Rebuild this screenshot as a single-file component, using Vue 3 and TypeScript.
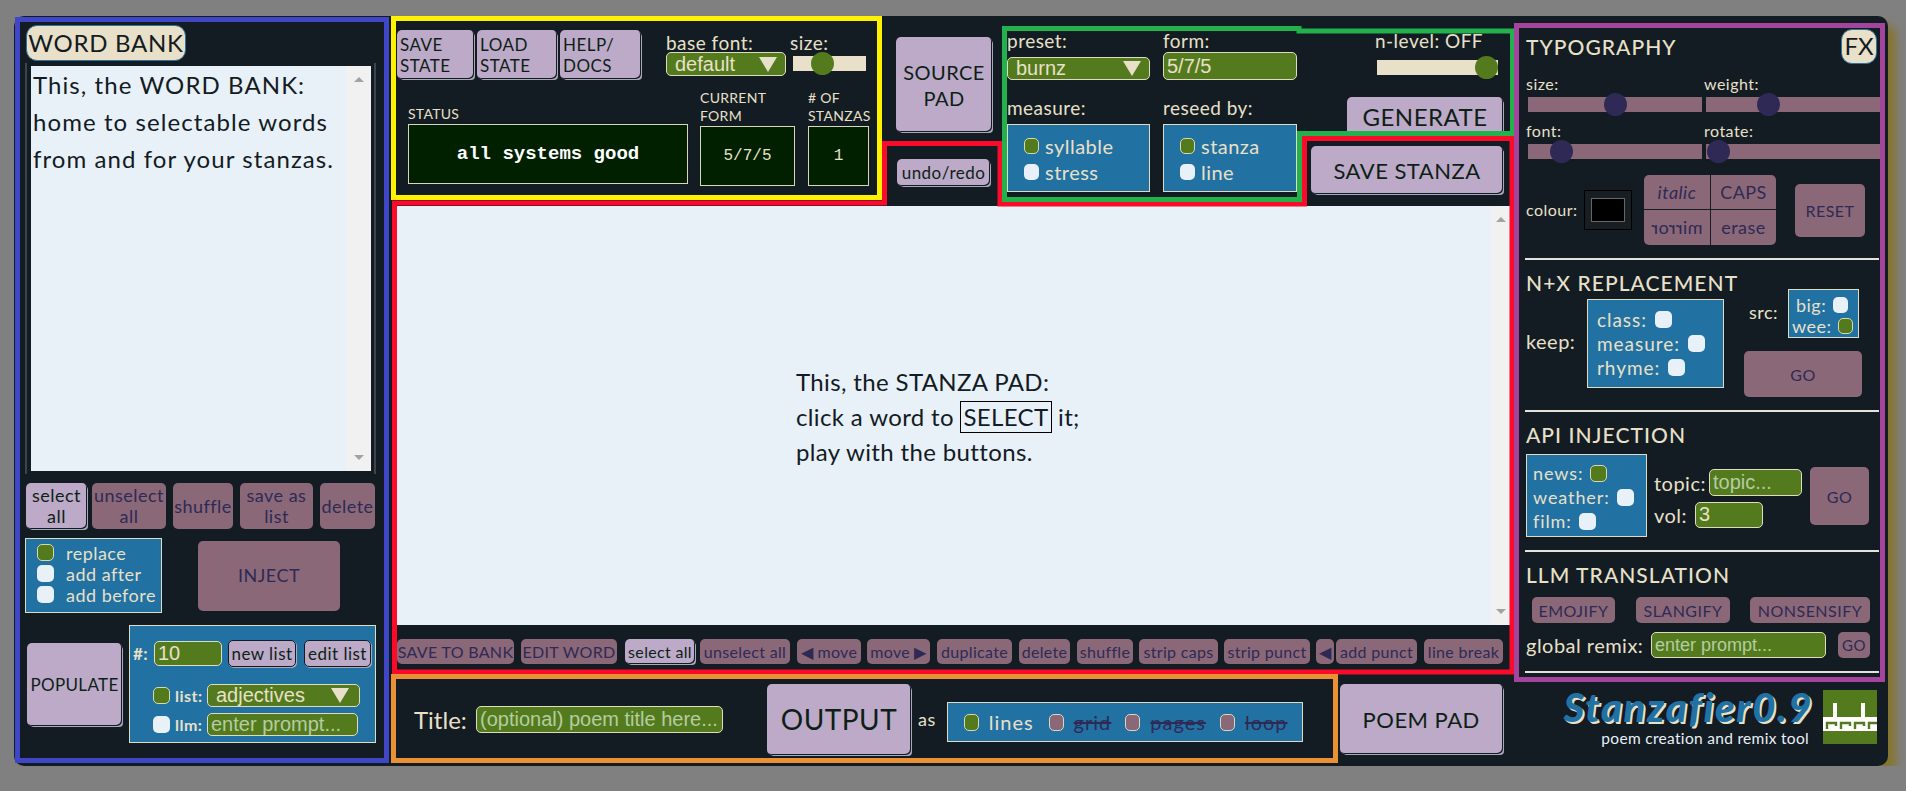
<template>
  <div class="app">
    <!-- word bank -->
    <aside class="bank">
      <div class="pill word-title">WORD BANK</div>
      <div class="textbox bank-text">
        <div class="textbox-body">This, the WORD BANK:<br />home to selectable words<br />from and for your stanzas.</div>
        <div class="scroll"><i class="up"></i><i class="down"></i></div>
      </div>
      <div class="bank-actions">
        <button class="btn w61">select<br />all</button>
        <button class="btn off w74">unselect<br />all</button>
        <button class="btn off w60">shuffle</button>
        <button class="btn off w73">save as<br />list</button>
        <button class="btn off w55">delete</button>
      </div>
      <div class="inject-row">
        <div class="box insert-opts">
          <label><span class="chk on"></span>replace</label>
          <label><span class="chk"></span>add after</label>
          <label><span class="chk"></span>add before</label>
        </div>
        <button class="btn off inject">INJECT</button>
      </div>
      <div class="populate-row">
        <button class="btn populate">POPULATE</button>
        <div class="box pop-opts">
          <div class="pop-top">
            <span class="hash">#:</span>
            <input class="field count" value="10" />
            <button class="btn mini new-list">new list</button>
            <button class="btn mini edit-list">edit list</button>
          </div>
          <div class="pop-line">
            <span class="chk on"></span><span class="pop-lab">list:</span>
            <div class="field picker list-pick">adjectives<i class="tri"></i></div>
          </div>
          <div class="pop-line llm-line">
            <span class="chk"></span><span class="pop-lab">llm:</span>
            <input class="field llm-input" placeholder="enter prompt..." />
          </div>
        </div>
      </div>
    </aside>

    <main class="centre">
      <div class="top">
        <section class="state">
          <div class="state-top">
            <button class="btn left-text w77">SAVE<br />STATE</button>
            <button class="btn left-text w80">LOAD<br />STATE</button>
            <button class="btn left-text w81">HELP/<br />DOCS</button>
            <div class="font-pick">
              <div class="lab">base font:</div>
              <div class="field picker base-pick">default<i class="tri"></i></div>
            </div>
            <div class="font-size">
              <div class="lab">size:</div>
              <div class="slider cream-track"><span class="thumb green" :style="{ left: '18px' }"></span></div>
            </div>
          </div>
          <div class="readouts">
            <div class="readout status">
              <div class="small-lab">STATUS</div>
              <div class="screen bright">all systems good</div>
            </div>
            <div class="readout form-read">
              <div class="small-lab">CURRENT<br />FORM</div>
              <div class="screen">5/7/5</div>
            </div>
            <div class="readout count-read">
              <div class="small-lab"># OF<br />STANZAS</div>
              <div class="screen">1</div>
            </div>
          </div>
        </section>

        <section class="mid-btns">
          <button class="btn source">SOURCE<br />PAD</button>
          <button class="btn undo">undo/redo</button>
        </section>

        <section class="gen">
          <div class="gen-col col-a">
            <div class="lab">preset:</div>
            <div class="field picker preset-pick">burnz<i class="tri"></i></div>
            <div class="lab measure-lab">measure:</div>
            <div class="box gen-box">
              <label><span class="chk on small"></span>syllable</label>
              <label><span class="chk small"></span>stress</label>
            </div>
          </div>
          <div class="gen-col col-b">
            <div class="lab">form:</div>
            <input class="field form-input" value="5/7/5" />
            <div class="lab measure-lab second">reseed by:</div>
            <div class="box gen-box">
              <label><span class="chk on small"></span>stanza</label>
              <label><span class="chk small"></span>line</label>
            </div>
          </div>
          <div class="gen-col col-c">
            <div class="lab nlevel">n-level: OFF</div>
            <div class="slider cream-track n-slider"><span class="thumb green" :style="{ left: '98px' }"></span></div>
            <button class="btn generate">GENERATE</button>
            <button class="btn save-stanza">SAVE STANZA</button>
          </div>
        </section>
      </div>

      <div class="textbox-pad">
        <div class="pad-body">
          <p>This, the STANZA PAD:<br />click a word to <span class="picked">SELECT</span> it;<br />play with the buttons.</p>
        </div>
        <div class="scroll"><i class="up"></i><i class="down"></i></div>
      </div>

      <div class="pad-tools">
        <button
          v-for="t in padTools"
          :key="t.label"
          class="btn tool"
          :class="{ off: !t.active }"
          :style="{ width: t.w + 'px', marginLeft: t.gap + 'px' }"
        >{{ t.label }}</button>
      </div>

      <div class="output">
        <span class="title-lab">Title:</span>
        <input class="field title-input" placeholder="(optional) poem title here..." />
        <button class="btn output-btn">OUTPUT</button>
        <span class="as">as</span>
        <div class="box out-opts">
          <span class="chk on tall"></span><span class="out-on">lines</span>
          <span class="chk mauve tall"></span><s>grid</s>
          <span class="chk mauve tall"></span><s>pages</s>
          <span class="chk mauve tall"></span><s>loop</s>
        </div>
        <button class="btn poem-pad">POEM PAD</button>
      </div>
    </main>

    <!-- effects column -->
    <aside class="fx">
      <section class="fx-sec sec-type">
        <div class="type-head">
          <h2>TYPOGRAPHY</h2>
          <div class="pill fx-pill">FX</div>
        </div>
        <div class="type-sliders">
          <div v-for="s in typeSliders" :key="s.label" class="type-slider">
            <div class="lab16">{{ s.label }}</div>
            <div class="slider mauve-track"><span class="thumb navy" :style="{ left: s.at + 'px' }"></span></div>
          </div>
        </div>
        <div class="type-tools">
          <span class="lab16">colour:</span>
          <div class="swatch"><i></i></div>
          <div class="style-grid">
            <button class="btn off ital">italic</button>
            <button class="btn off">CAPS</button>
            <button class="btn off"><span class="mirror">mirror</span></button>
            <button class="btn off">erase</button>
          </div>
          <button class="btn off reset">RESET</button>
        </div>
      </section>

      <section class="fx-sec sec-nx">
        <h2>N+X REPLACEMENT</h2>
        <div class="nx-row">
          <span class="lab18">keep:</span>
          <div class="box keep-box">
            <label>class:<span class="chk"></span></label>
            <label>measure:<span class="chk"></span></label>
            <label>rhyme:<span class="chk"></span></label>
          </div>
          <div class="nx-right">
            <div class="src-row">
              <span class="lab16">src:</span>
              <div class="box src-box">
                <label class="ind">big:<span class="chk small"></span></label>
                <label>wee:<span class="chk on small"></span></label>
              </div>
            </div>
            <button class="btn off nx-go">GO</button>
          </div>
        </div>
      </section>

      <section class="fx-sec sec-api">
        <h2>API INJECTION</h2>
        <div class="api-row">
          <div class="box api-box">
            <label>news:<span class="chk on"></span></label>
            <label>weather:<span class="chk"></span></label>
            <label>film:<span class="chk"></span></label>
          </div>
          <div class="api-fields">
            <div class="api-line"><span class="lab18">topic:</span><input class="field topic" placeholder="topic..." /></div>
            <div class="api-line"><span class="lab18">vol:</span><input class="field vol" value="3" /></div>
          </div>
          <button class="btn off api-go">GO</button>
        </div>
      </section>

      <section class="fx-sec sec-llm">
        <h2>LLM TRANSLATION</h2>
        <div class="llm-btns">
          <button class="btn off emo">EMOJIFY</button>
          <button class="btn off slang">SLANGIFY</button>
          <button class="btn off nons">NONSENSIFY</button>
        </div>
        <div class="remix">
          <span class="lab18">global remix:</span>
          <input class="field remix-input" placeholder="enter prompt..." />
          <button class="btn off remix-go">GO</button>
        </div>
      </section>

      <footer class="brand">
        <div class="brand-text">
          <div class="logo">Stanzafier0.9</div>
          <div class="tagline">poem creation and remix tool</div>
        </div>
        <svg class="mark" viewBox="0 0 54 54" width="54" height="54">
          <rect width="54" height="54" fill="#547a1e" />
          <path d="M0 27h54v14H0z M10 13h4v14h-4z M38 13h4v14h-4z" fill="#fff" />
          <path d="M4 39v-6h9v3 M18 39v-6h9v3 M32 39v-6h9v3 M46 39v-6h8" fill="none" stroke="#547a1e" stroke-width="2.4" />
        </svg>
      </footer>
    </aside>

    <!-- coloured region outlines drawn over the whole panel -->
    <svg class="regions" width="1906" height="791" viewBox="0 0 1906 791">
      <rect x="17.5" y="19.5" width="369" height="741" stroke="#4046c8" />
      <path d="M394.5 203V672H1512V138.5H1304.5V204H1000V143.5H884.5V203Z" stroke="#fb0a2a" />
      <rect x="393.5" y="18.5" width="486" height="179" stroke="#fff200" />
      <path d="M1004.5 199.5V28.5H1299V31H1512.5V133.5H1299.5V199.5Z" stroke="#22b14c" />
      <rect x="393.5" y="676.5" width="942" height="84" stroke="#ea9035" />
      <rect x="1516.5" y="25.5" width="366" height="654" stroke="#a3459c" />
    </svg>
  </div>
</template>

<script setup lang="ts">
interface PadTool {
  label: string
  w: number
  gap: number
  active?: boolean
}

const padTools: PadTool[] = [
  { label: 'SAVE TO BANK', w: 117, gap: 0 },
  { label: 'EDIT WORD', w: 96, gap: 7 },
  { label: 'select all', w: 70, gap: 8, active: true },
  { label: 'unselect all', w: 90, gap: 5 },
  { label: '◀ move', w: 64, gap: 7 },
  { label: 'move ▶', w: 63, gap: 6 },
  { label: 'duplicate', w: 75, gap: 7 },
  { label: 'delete', w: 51, gap: 7 },
  { label: 'shuffle', w: 56, gap: 7 },
  { label: 'strip caps', w: 79, gap: 6 },
  { label: 'strip punct', w: 86, gap: 6 },
  { label: '◀', w: 18, gap: 6 },
  { label: 'add punct', w: 81, gap: 2 },
  { label: 'line break', w: 79, gap: 7 },
]

const typeSliders = [
  { label: 'size:', at: 76 },
  { label: 'weight:', at: 51 },
  { label: 'font:', at: 22 },
  { label: 'rotate:', at: 1 },
]
</script>

<style>
html,
body {
  margin: 0;
  background: #808080;
}
</style>

<style scoped>
.app {
  position: relative;
  box-sizing: border-box;
  display: grid;
  grid-template-columns: 377px 1123px 374px;
  width: 1874px;
  height: 750px;
  margin: 16px 0 0 14px;
  background: #131b23;
  border-radius: 10px;
  box-shadow: 8px 9px 8px #857530;
  color: #e8e0c8;
  font-family: Lato, "Noto Sans", sans-serif;
  letter-spacing: 0.03em;
}

* {
  box-sizing: border-box;
}

.regions {
  position: absolute;
  left: -14px;
  top: -16px;
  pointer-events: none;
}

.regions rect,
.regions path {
  fill: none;
  stroke-width: 5;
}

.btn {
  display: block;
  padding: 0;
  border: 0;
  border-radius: 5px;
  background: #bcaac8;
  color: #0e1f16;
  font: inherit;
  letter-spacing: inherit;
  font-size: 18px;
  line-height: 21px;
  box-shadow: inset -1px -1px 0 #131b23, 2px 2px 0 -1px #a9a9bc;
}

.btn.off {
  background: #8a6878;
  color: #2e2a55;
  box-shadow: none;
}

.pill {
  background: #e8e0c8;
  color: #131b23;
  border: 1px solid #2f739c;
  border-radius: 11px;
}

.box {
  background: #2271a3;
  border: 1px solid #e0dcc0;
  color: #e8e0c8;
}

.box label {
  display: flex;
  align-items: center;
}

.chk {
  display: inline-block;
  flex: none;
  width: 17px;
  height: 17px;
  background: #e8f0f8;
  border-radius: 5px;
}

.chk.on {
  background: #547a1e;
  border: 1px solid #d8d8b0;
}

.chk.small {
  width: 15px;
  height: 16px;
}

.chk.tall {
  width: 15px;
  height: 17px;
}

.chk.mauve {
  background: #8a6878;
  border: 1px solid #d8d8c0;
}

.field {
  display: block;
  background: #547a1e;
  border: 1px solid #e0dcc0;
  border-radius: 5px;
  color: #e8e0c8;
  font-family: "Liberation Sans", Arial, sans-serif;
  letter-spacing: 0;
  font-size: 18px;
  padding: 0 3px;
  outline: none;
}

.field::placeholder {
  color: #b4cda0;
  opacity: 1;
}

.picker {
  display: flex;
  align-items: center;
  justify-content: space-between;
  padding: 0 8px;
}

.tri {
  width: 0;
  height: 0;
  border-left: 9px solid transparent;
  border-right: 9px solid transparent;
  border-top: 15px solid #e8e0c8;
}

.slider {
  position: relative;
  height: 15px;
}

.cream-track {
  background: #e8e0c8;
}

.mauve-track {
  background: #8a6878;
}

.thumb {
  position: absolute;
  top: -4px;
  width: 23px;
  height: 23px;
  border-radius: 50%;
}

.thumb.green {
  background: #547a1e;
}

.thumb.navy {
  background: #2f2a55;
}

.scroll {
  position: relative;
  flex: none;
  background: #f1f1f1;
}

.scroll i {
  position: absolute;
  left: 50%;
  margin-left: -5px;
  border-left: 5px solid transparent;
  border-right: 5px solid transparent;
}

.scroll .up {
  top: 11px;
  border-bottom: 5px solid #a3a3a3;
}

.scroll .down {
  bottom: 11px;
  border-top: 5px solid #a3a3a3;
}

/* word bank */
.bank {
  display: flex;
  flex-direction: column;
  padding: 9px 0 0 11px;
}

.word-title {
  width: 160px;
  height: 36px;
  margin-left: 1px;
  font-size: 24px;
  line-height: 33px;
  text-align: center;
  letter-spacing: 0.03em;
  white-space: nowrap;
}

.bank-text {
  display: flex;
  width: 351px;
  height: 411px;
  margin-top: 2px;
  padding: 3px 3px 3px 4px;
  border-left: 2px solid #3c444c;
  border-right: 2px solid #3c444c;
}

.bank-text .scroll {
  width: 25px;
}

.textbox-body {
  flex: 1;
  background: #e8f0f8;
  color: #131b23;
  font-size: 24px;
  line-height: 37px;
  padding: 0 0 0 2px;
  letter-spacing: 0.045em;
  white-space: nowrap;
}

.bank-actions {
  display: flex;
  margin: 9px 0 0 1px;
  height: 46px;
}

.bank-actions .btn + .btn {
  margin-left: 7px;
}

.bank-actions .btn + .btn.w74 { margin-left: 5px; }
.w55 { width: 55px; }
.w60 { width: 60px; }
.w61 { width: 61px; }
.w73 { width: 73px; }
.w74 { width: 74px; }
.w77 { width: 77px; }
.w80 { width: 80px; }
.w81 { width: 81px; }

.inject-row {
  display: flex;
  align-items: center;
  margin-top: 9px;
}

.insert-opts {
  width: 137px;
  height: 75px;
  padding: 3px 0 0 11px;
  font-size: 18px;
}

.insert-opts label {
  height: 21px;
}

.insert-opts .chk {
  margin-right: 12px;
}

.inject {
  width: 142px;
  height: 70px;
  margin-left: 36px;
}

.populate-row {
  display: flex;
  align-items: center;
  margin-top: 12px;
}

.populate {
  width: 95px;
  height: 83px;
  margin-left: 2px;
  font-size: 17px;
  letter-spacing: 0.02em;
}

.pop-opts {
  width: 247px;
  height: 118px;
  margin-left: 7px;
  padding: 14px 0 0 3px;
  font-size: 17px;
}

.pop-top {
  display: flex;
  align-items: center;
}

.hash {
  width: 21px;
  font-weight: 700;
}

.count {
  width: 68px;
  height: 25px;
  font-size: 20px;
}

.mini {
  height: 27px;
  font-size: 17px;
  border: 1px solid #131b23;
  box-shadow: 1px 1px 0 #a9a9bc;
}

.new-list {
  width: 68px;
  margin-left: 6px;
}

.edit-list {
  width: 67px;
  margin-left: 8px;
}

.pop-line {
  display: flex;
  align-items: center;
  margin: 17px 0 0 20px;
}

.llm-line {
  margin-top: 6px;
}

.pop-lab {
  width: 37px;
  padding-left: 5px;
  font-weight: 700;
  font-size: 16px;
}

.list-pick {
  width: 153px;
  height: 23px;
  font-size: 20px;
  padding-right: 10px;
}

.llm-input {
  width: 151px;
  height: 23px;
  font-size: 20px;
}

/* centre */
.centre {
  display: flex;
  flex-direction: column;
}

.top {
  display: flex;
  height: 190px;
}

.state {
  flex: none;
  width: 491px;
  padding: 14px 0 0 6px;
}

.state-top {
  display: flex;
}

.state-top .btn {
  height: 49px;
  margin-right: 3px;
}

.left-text {
  text-align: left;
  padding-left: 3px;
  font-size: 17px;
}

.lab {
  font-size: 19px;
  line-height: 22px;
}

.font-pick {
  margin: 2px 0 0 22px;
}

.base-pick {
  width: 120px;
  height: 24px;
  margin-top: -2px;
  font-size: 20px;
}

.font-size {
  margin: 2px 0 0 4px;
}

.font-size .slider {
  width: 73px;
  margin: 2px 0 0 3px;
}

.readouts {
  display: flex;
  align-items: flex-end;
  height: 107px;
  margin-left: 11px;
}

.small-lab {
  font-size: 14px;
  line-height: 18px;
  letter-spacing: 0.02em;
  padding-bottom: 1px;
}

.screen {
  display: flex;
  align-items: center;
  justify-content: center;
  height: 60px;
  background: #002000;
  border: 1px solid #d8d8b8;
  color: #e8e0c8;
  font-family: "Liberation Mono", monospace;
  font-size: 16px;
  letter-spacing: 0;
}

.screen.bright {
  color: #fff;
  font-weight: 700;
  font-size: 19px;
}

.status {
  width: 280px;
  margin-bottom: 2px;
}

.form-read {
  width: 95px;
  margin-left: 12px;
}

.count-read {
  width: 61px;
  margin-left: 13px;
}

.mid-btns {
  flex: none;
  width: 120px;
  padding: 21px 0 0 14px;
}

.source {
  width: 96px;
  height: 95px;
  font-size: 20px;
  line-height: 26px;
}

.undo {
  width: 93px;
  height: 27px;
  margin: 27px 0 0 1px;
  font-size: 17px;
}

.gen {
  display: flex;
  flex: 1;
  padding: 14px 0 0 5px;
}

.gen-col {
  flex: none;
}

.col-a {
  width: 156px;
}

.col-b {
  width: 134px;
}

.gen-col .lab {
  height: 22px;
}

.preset-pick {
  width: 143px;
  height: 23px;
  margin-top: 5px;
  font-size: 20px;
}

.form-input {
  width: 134px;
  height: 28px;
  margin-top: 0;
  font-size: 20px;
}

.measure-lab {
  margin-top: 17px;
}

.measure-lab.second {
  margin-top: 17px;
}

.gen-box {
  width: 100%;
  height: 68px;
  margin-top: 5px;
  padding: 8px 0 0 16px;
  font-size: 20px;
}

.col-a .gen-box {
  width: 143px;
}

.gen-box label {
  height: 26px;
}

.gen-box .chk {
  margin-right: 6px;
}

.col-c {
  width: 200px;
  margin-left: 14px;
}

.nlevel {
  margin-left: 64px;
}

.n-slider {
  width: 121px;
  margin: 8px 0 0 66px;
}

.generate {
  width: 156px;
  height: 39px;
  margin: 22px 0 0 36px;
  font-size: 24px;
}

.save-stanza {
  width: 192px;
  height: 48px;
  margin-top: 10px;
  font-size: 22px;
}

.textbox-pad {
  display: flex;
  flex: none;
  height: 419px;
  margin-left: 6px;
  width: 1113px;
}

.textbox-pad .scroll {
  width: 19px;
}

.pad-body {
  display: flex;
  flex: 1;
  align-items: center;
  background: #e8f0f8;
  color: #131b23;
  font-size: 24px;
  line-height: 35px;
  padding-left: 399px;
  letter-spacing: 0.015em;
}

.pad-body p {
  margin: 2px 0 0;
  white-space: nowrap;
}

.picked {
  display: inline-block;
  height: 32px;
  line-height: 30px;
  padding: 0 2px;
  border: 1px solid #000;
}

.pad-tools {
  display: flex;
  align-items: center;
  height: 49px;
  padding: 4px 0 0 6px;
}

.tool {
  flex: none;
  height: 25px;
  font-size: 16px;
  white-space: nowrap;
  letter-spacing: 0.02em;
}

.output {
  display: flex;
  align-items: center;
  height: 92px;
  padding-left: 23px;
  padding-bottom: 2px;
}

.title-lab {
  width: 62px;
  font-size: 24px;
  letter-spacing: 0;
}

.title-input {
  width: 247px;
  height: 27px;
  font-size: 20px;
}

.output-btn {
  width: 144px;
  height: 71px;
  margin-left: 44px;
  font-size: 28px;
}

.as {
  margin-left: 7px;
  font-size: 18px;
}

.out-opts {
  display: flex;
  align-items: center;
  width: 356px;
  height: 40px;
  margin: 6px 0 0 11px;
  padding-left: 16px;
  font-size: 20px;
  letter-spacing: 0.05em;
}

.out-opts .chk {
  margin-right: 10px;
}

.out-opts s {
  color: #2e2a55;
  margin-right: 14px;
}

.out-on {
  margin-right: 15px;
}

.poem-pad {
  width: 163px;
  height: 70px;
  margin-left: 37px;
  font-size: 22px;
}

/* effects column */
.fx {
  padding: 12px 0 0 11px;
  display: flex;
  flex-direction: column;
}

.fx-sec {
  width: 354px;
  padding-left: 1px;
  border-bottom: 2px solid #e4e2da;
}

.fx h2 {
  margin: 0;
  font-size: 21px;
  line-height: 26px;
  font-weight: 500;
  letter-spacing: 0.05em;
}

.lab16 {
  font-size: 16px;
  line-height: 20px;
}

.lab18 {
  font-size: 20px;
  white-space: nowrap;
}

.sec-type {
  height: 232px;
}

.type-head {
  display: flex;
  align-items: center;
  justify-content: space-between;
  width: 351px;
  height: 36px;
  padding-top: 1px;
}

.fx-pill {
  width: 36px;
  height: 35px;
  font-size: 24px;
  line-height: 32px;
  text-align: center;
  letter-spacing: 0;
}

.type-sliders {
  display: grid;
  grid-template-columns: 178px 178px;
  row-gap: 9px;
  margin-top: 10px;
}

.type-slider .lab16 {
  height: 23px;
}

.type-slider .slider {
  width: 174px;
  margin-left: 2px;
}

.type-tools {
  display: flex;
  align-items: center;
  margin-top: 16px;
}

.type-tools .lab16 {
  width: 58px;
}

.swatch {
  display: flex;
  align-items: center;
  justify-content: center;
  width: 48px;
  height: 40px;
  background: #171f25;
  border: 1px solid #000;
}

.swatch i {
  width: 34px;
  height: 24px;
  background: #000;
  border: 1px solid #666;
}

.style-grid {
  display: grid;
  grid-template-columns: 66px 65px;
  grid-template-rows: 34px 35px;
  gap: 1px;
  margin-left: 12px;
  border-radius: 5px;
  overflow: hidden;
}

.style-grid .btn {
  border-radius: 0;
  font-size: 18px;
}

.ital {
  font-style: italic;
}

.mirror {
  display: inline-block;
  transform: scaleX(-1);
}

.reset {
  width: 70px;
  height: 53px;
  margin-left: 19px;
  font-size: 16px;
}

.sec-nx {
  height: 152px;
  padding-top: 10px;
}

.nx-row {
  display: flex;
  align-items: flex-start;
  margin-top: 3px;
}

.nx-row > .lab18 {
  width: 61px;
  margin-top: 30px;
}

.keep-box {
  width: 137px;
  height: 89px;
  padding: 7px 0 0 9px;
  font-size: 19px;
  letter-spacing: 0.05em;
}

.keep-box label {
  height: 24px;
}

.keep-box .chk {
  margin-left: 8px;
}

.nx-right {
  margin: -10px 0 0 20px;
}

.src-row {
  display: flex;
  align-items: center;
  padding-left: 5px;
}

.src-row .lab16 {
  width: 39px;
  margin-top: -4px;
  font-size: 18px;
}

.src-box {
  width: 71px;
  height: 49px;
  padding: 4px 0 0 3px;
  font-size: 18px;
}

.src-box label {
  height: 21px;
}

.src-box .ind {
  padding-left: 4px;
}

.src-box .chk {
  margin-left: 7px;
}

.nx-go {
  width: 118px;
  height: 46px;
  margin-top: 13px;
  font-size: 16px;
}

.sec-api {
  height: 140px;
  padding-top: 10px;
}

.api-row {
  display: flex;
  margin-top: 6px;
}

.api-box {
  width: 121px;
  height: 83px;
  padding: 6px 0 0 6px;
  font-size: 18px;
  letter-spacing: 0.05em;
}

.api-box label {
  height: 24px;
}

.api-box .chk {
  margin-left: 7px;
}

.api-fields {
  width: 163px;
  padding: 15px 0 0 7px;
}

.api-line {
  display: flex;
  align-items: center;
  height: 27px;
  margin-bottom: 5px;
}

.api-line .lab18 {
  width: 55px;
}

.api-line:last-child .lab18 {
  width: 41px;
}

.topic {
  width: 93px;
  height: 27px;
  font-size: 20px;
}

.vol {
  width: 68px;
  height: 26px;
  font-size: 20px;
}

.api-go {
  width: 59px;
  height: 58px;
  margin-top: 13px;
  font-size: 16px;
}

.sec-llm {
  height: 121px;
  padding-top: 10px;
}

.llm-btns {
  display: flex;
  margin: 9px 0 0 6px;
}

.llm-btns .btn {
  height: 26px;
  font-size: 16px;
}

.emo {
  width: 83px;
}

.slang {
  width: 94px;
  margin-left: 21px;
}

.nons {
  width: 120px;
  margin-left: 20px;
}

.remix {
  display: flex;
  align-items: center;
  margin-top: 9px;
}

.remix .lab18 {
  width: 125px;
}

.remix-input {
  width: 175px;
  height: 26px;
  font-size: 18px;
}

.remix-go {
  width: 32px;
  height: 26px;
  margin-left: 12px;
  font-size: 15px;
}

.brand {
  display: flex;
  align-items: flex-start;
  justify-content: flex-end;
  width: 352px;
  padding-top: 17px;
}

.brand-text {
  text-align: right;
  margin-right: 10px;
}

.logo {
  height: 34px;
  font-size: 40px;
  line-height: 34px;
  font-style: italic;
  font-weight: 900;
  letter-spacing: 0.04em;
  color: #2271a3;
  text-shadow: 2px 2px 0 #e8e0c8;
  margin-right: 0;
  white-space: nowrap;
}

.tagline {
  margin-top: 5px;
  margin-right: 4px;
  font-size: 15.5px;
  line-height: 18px;
  color: #e8f0f8;
  letter-spacing: 0.02em;
}

.mark {
  flex: none;
  margin-right: 0;
}
</style>
